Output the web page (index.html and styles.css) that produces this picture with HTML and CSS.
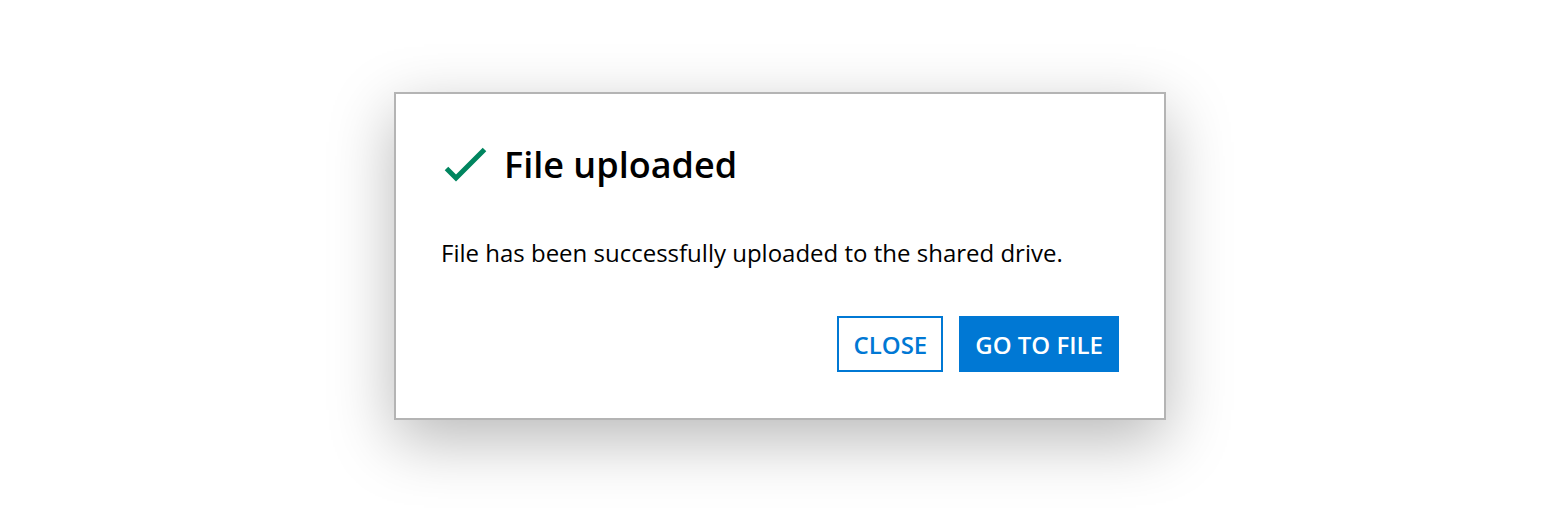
FILE: index.html
```html
<!DOCTYPE html>
<html lang="en">
<head>
    <meta charset="UTF-8">
    <meta name="viewport" content="width=device-width, initial-scale=1.0">
    <title>File uploaded</title>
    <link rel="stylesheet" href="styles.css">
</head>
<body>
    <div class="dialog" role="dialog" aria-labelledby="dialogTitle">
        <div class="dialog-header">
            <svg class="dialog-icon" width="44" height="38" viewBox="0 0 44 38" aria-hidden="true">
                <path d="M3.5 22.5 L13 32 L41.5 3.5" fill="none" stroke="#00855f" stroke-width="5"/>
            </svg>
            <h1 id="dialogTitle" class="dialog-title">File uploaded</h1>
        </div>

        <p class="dialog-message">File has been successfully uploaded to the shared drive.</p>

        <div class="dialog-actions">
            <button class="btn btn-outline">Close</button>
            <button class="btn btn-primary">Go to file</button>
        </div>
    </div>
</body>
</html>
```

FILE: styles.css
```css
* {
    margin: 0;
    padding: 0;
    box-sizing: border-box;
}

body {
    font-family: 'Open Sans', 'Noto Sans', sans-serif;
    background: #ffffff;
    color: #000000;
    min-height: 100vh;
    display: flex;
    align-items: center;
    justify-content: center;
}

.dialog {
    width: 772px;
    height: 328px;
    background: #ffffff;
    border: 2px solid #b4b4b4;
    box-shadow: 0 20px 60px rgba(0, 0, 0, 0.28);
    padding: 47px 45px 46px 45px;
    display: flex;
    flex-direction: column;
}

.dialog-header {
    display: flex;
    align-items: center;
    gap: 17px;
}

.dialog-icon {
    margin-left: 2px;
    flex-shrink: 0;
}

.dialog-title {
    font-size: 36px;
    font-weight: 600;
    line-height: 48px;
}

.dialog-message {
    margin-top: 48px;
    font-size: 24px;
    line-height: 32px;
}

.dialog-actions {
    margin-top: auto;
    display: flex;
    justify-content: flex-end;
    gap: 16px;
}

.btn {
    height: 56px;
    padding: 0 14px;
    font-family: inherit;
    font-size: 24px;
    font-weight: 600;
    text-transform: uppercase;
    border-radius: 0;
    cursor: pointer;
}

.btn-outline {
    background: #ffffff;
    color: #0078d4;
    border: 2px solid #0078d4;
}

.btn-primary {
    background: #0078d4;
    color: #ffffff;
    border: 2px solid #0078d4;
}
```
